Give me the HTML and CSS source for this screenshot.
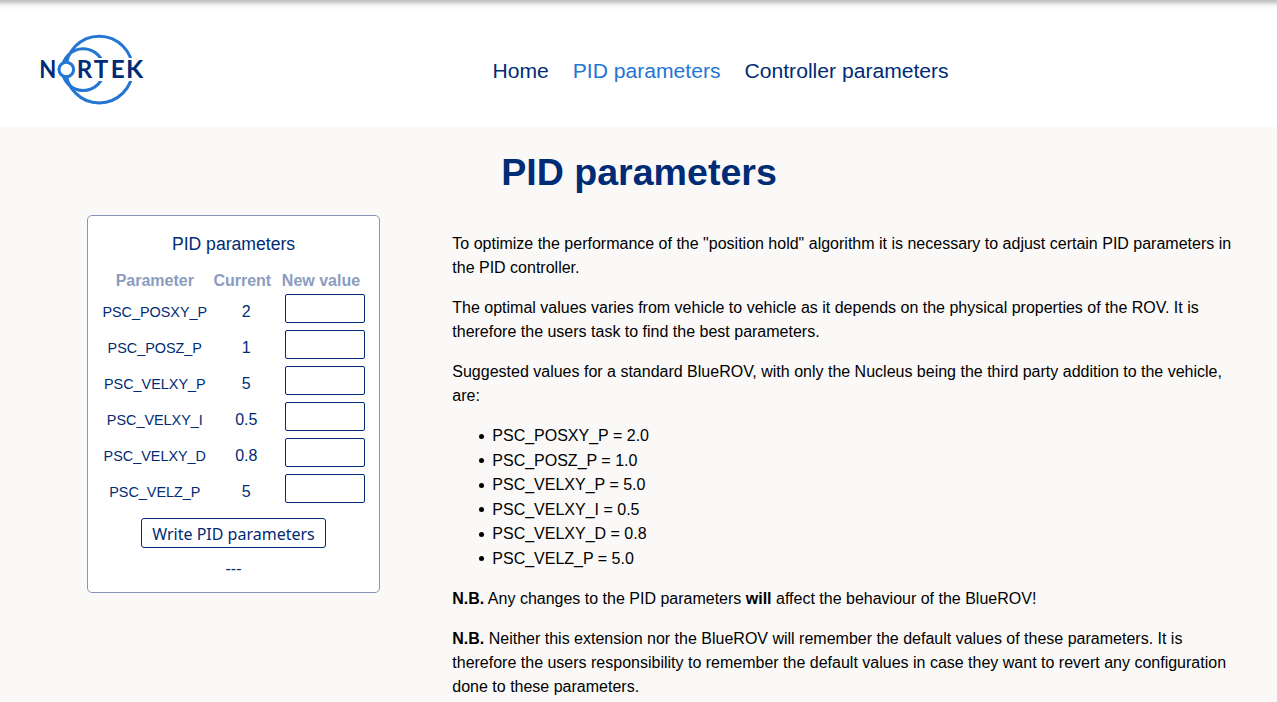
FILE: index.html
```
<!DOCTYPE html>
<html lang="en">
<head>
<meta charset="utf-8">
<title>PID parameters</title>
<link rel="stylesheet" href="styles.css">
</head>
<body>
<header class="header">
  <svg class="logo" viewBox="0 0 105 72" width="105" height="72" role="img" aria-label="Nortek">
    <clipPath id="gap"><path d="M0 0H105V24H34V47H105V72H0Z"/></clipPath>
    <g class="rings">
      <circle cx="59.2" cy="35.6" r="33.4" clip-path="url(#gap)"/>
      <circle cx="43.2" cy="35.6" r="20.9" clip-path="url(#gap)"/>
      <circle class="letter-o" cx="26.3" cy="35.5" r="7.3"/>
    </g>
    <g class="letters">
      <text x="-.8" y="44.3" textLength="17" lengthAdjust="spacingAndGlyphs">N</text>
      <text x="36.8" y="44.3">R</text>
      <text x="53.8" y="44.3">T</text>
      <text x="70.8" y="44.3">E</text>
      <text x="86" y="44.3" textLength="17.2" lengthAdjust="spacingAndGlyphs">K</text>
    </g>
  </svg>
  <nav class="nav">
    <a class="nav-link">Home</a>
    <a class="nav-link active">PID parameters</a>
    <a class="nav-link">Controller parameters</a>
  </nav>
</header>
<main class="main">
  <h1 class="title">PID parameters</h1>
  <div class="content">
    <section class="card">
      <h2 class="card-title">PID parameters</h2>
      <div class="row head"><span>Parameter</span><span>Current</span><span class="new">New value</span></div>
      <div class="row"><span class="name">PSC_POSXY_P</span><span class="value">2</span><input class="field"></div>
      <div class="row"><span class="name">PSC_POSZ_P</span><span class="value">1</span><input class="field"></div>
      <div class="row"><span class="name">PSC_VELXY_P</span><span class="value">5</span><input class="field"></div>
      <div class="row"><span class="name">PSC_VELXY_I</span><span class="value">0.5</span><input class="field"></div>
      <div class="row"><span class="name">PSC_VELXY_D</span><span class="value">0.8</span><input class="field"></div>
      <div class="row"><span class="name">PSC_VELZ_P</span><span class="value">5</span><input class="field"></div>
      <button class="write">Write PID parameters</button>
      <div class="status">---</div>
    </section>
    <article class="text">
      <p>To optimize the performance of the "position hold" algorithm it is necessary to adjust certain PID parameters in the PID controller.</p>
      <p>The optimal values varies from vehicle to vehicle as it depends on the physical properties of the ROV. It is therefore the users task to find the best parameters.</p>
      <p>Suggested values for a standard BlueROV, with only the Nucleus being the third party addition to the vehicle, are:</p>
      <ul>
        <li>PSC_POSXY_P = 2.0</li>
        <li>PSC_POSZ_P = 1.0</li>
        <li>PSC_VELXY_P = 5.0</li>
        <li>PSC_VELXY_I = 0.5</li>
        <li>PSC_VELXY_D = 0.8</li>
        <li>PSC_VELZ_P = 5.0</li>
      </ul>
      <p><b>N.B.</b> Any changes to the PID parameters <b>will</b> affect the behaviour of the BlueROV!</p>
      <p><b>N.B.</b> Neither this extension nor the BlueROV will remember the default values of these parameters. It is therefore the users responsibility to remember the default values in case they want to revert any configuration done to these parameters.</p>
    </article>
  </div>
</main>
</body>
</html>
```
FILE: styles.css
```
* { box-sizing: border-box; }
html { overflow: hidden; }
body {
  margin: 0;
  height: 702px;
  overflow: hidden;
  background: #faf9f8;
  color: #000;
  font: 16px/24px "Liberation Sans", Arial, sans-serif;
}
.header {
  display: grid;
  grid-template-columns: 452.4px 1fr;
  height: 127px;
  padding: 34px 40px 0;
  background: linear-gradient(#bdbdbd 0, #cfcfcf 2px, #e6e6e6 4px, #f6f6f6 6px, #fff 10px);
}
.logo { display: block; }
.rings { fill: none; stroke: #2376d2; stroke-width: 3.1; }
.letter-o { fill: #fff; }
.letters { fill: #002b75; font: bold 24.2px Lato, sans-serif; }
.nav { display: flex; gap: 24px; padding-top: 25px; }
.nav-link { color: #002b75; font-size: 21.12px; line-height: 24px; }
.nav-link.active { color: #2376d2; }
.title {
  margin: 0;
  padding: 24px 0 0 1px;
  color: #002b75;
  font-size: 37.6px;
  line-height: 42px;
  text-align: center;
}
.content { display: flex; gap: 72.3px; padding: 22px 0 0 87px; }
.card {
  display: flex;
  flex-direction: column;
  align-items: center;
  flex: none;
  width: 293px;
  height: 378px;
  padding: 16px 14px 0;
  border: 1px solid #8496b9;
  border-radius: 5px;
  background: #fff;
  color: #002b75;
}
.card-title { margin: 0 0 13px; font-size: 17.6px; font-weight: 400; line-height: 24px; }
.row {
  display: grid;
  grid-template-columns: 105.6px 69.4px 1fr;
  align-self: stretch;
  height: 36px;
  padding-top: 6px;
  text-align: center;
}
.head { height: 25px; padding: 0; color: #8c9cbf; font-weight: bold; }
.head .new { white-space: nowrap; }
.value { padding-left: 8px; }
.name { font-size: 14.4px; line-height: 25px; }
.field {
  width: 80px;
  height: 29px;
  margin: -6px 0 0;
  justify-self: end;
  border: 1px solid #002b75;
  border-radius: 2px;
  background: #fff;
}
.write {
  flex: none;
  width: 185px;
  height: 30px;
  margin-top: 8px;
  padding: 2px 0 0;
  border: 1px solid #002b75;
  border-radius: 3px;
  background: #fff;
  color: #002b75;
  font: 16px/22px "Noto Sans", sans-serif;
}
.status { margin-top: 9px; }
.text { width: 786px; padding-top: 17px; }
.text p { margin: 0 0 16px; }
.text ul { margin: 0 0 16px; padding-left: 26.7px; list-style: none; }
.text li { display: flex; align-items: center; gap: 8px; line-height: 24.5px; }
.text li::before {
  content: "";
  width: 5.3px;
  height: 5.3px;
  border-radius: 50%;
  background: #000;
}
```
